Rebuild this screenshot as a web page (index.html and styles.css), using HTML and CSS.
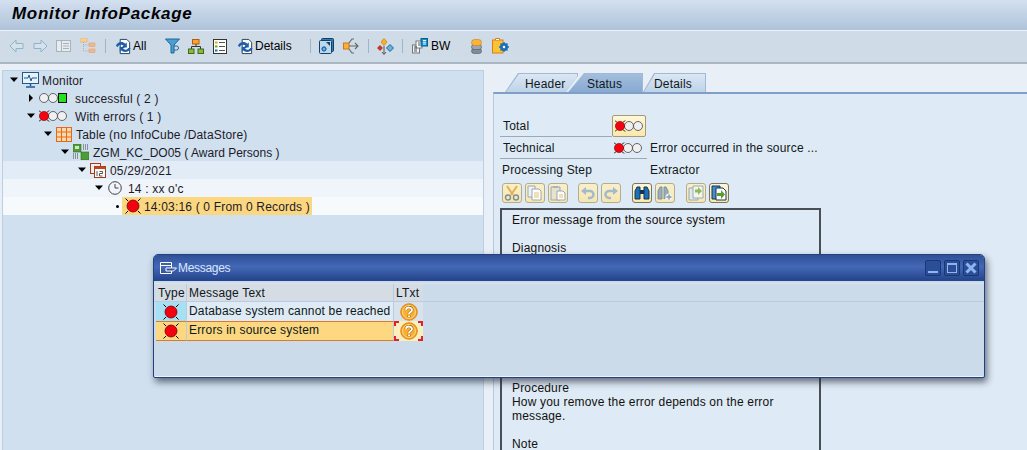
FILE: index.html
```html
<!DOCTYPE html>
<html lang="en">
<head>
  <meta charset="UTF-8">
  <meta name="viewport" content="width=device-width, initial-scale=1.0">
  <title>Monitor InfoPackage</title>
  <link rel="stylesheet" href="styles.css">
</head>
<body>
  <!-- Shared icons -->
  <svg class="defs" width="0" height="0">
    <symbol id="light-red" viewBox="0 0 30 16">
      <path d="M0 2.500l2 2M10 2.500l-2 2M0 13.500l2-2M10 13.500l-2-2" stroke="#000" fill="none"/>
      <circle cx="14" cy="8" r="4.500" fill="#eef0f2" stroke="#444" stroke-width=".8"/>
      <circle cx="23" cy="8" r="4.500" fill="#eef0f2" stroke="#444" stroke-width=".8"/>
      <circle cx="5" cy="8" r="4.600" fill="#f5000f" stroke="#700" stroke-width=".6"/>
    </symbol>
    <symbol id="light-green" viewBox="0 0 30 16">
      <circle cx="5" cy="8" r="4.500" fill="#eef0f2" stroke="#444" stroke-width=".8"/>
      <circle cx="14" cy="8" r="4.500" fill="#eef0f2" stroke="#444" stroke-width=".8"/>
      <rect x="19.500" y="3.500" width="8" height="9" fill="#27e21f" stroke="#111"/>
    </symbol>
    <symbol id="led-red" viewBox="0 0 16 16">
      <path d="M.5.5l2.500 2.500M15.500.5L13 3M.5 15.500L3 13M15.500 15.500L13 13" stroke="#000" fill="none"/>
      <circle cx="8" cy="8" r="6" fill="#f2000f" stroke="#700" stroke-width=".8"/>
    </symbol>
    <symbol id="refresh" viewBox="0 0 18 18">
      <path d="M5.500 1.500h7l3 3v12h-10z" fill="#fff" stroke="#1d3d63"/>
      <path d="M1 8.500C2 4 8 3 11 6l1.500-1.500V10H7l2-2C7 6.500 4 7 3 9.500z" fill="#1f5ea8"/>
      <path d="M16.500 10.500C15.500 15 9 16 6.500 13L5 14.500V9.500h5.500l-2 2c2 1.500 4.500 1 5.500-1z" fill="#1f5ea8"/>
    </symbol>
    <symbol id="help" viewBox="0 0 18 18">
      <circle cx="9" cy="9" r="8.300" fill="#f7a11c" stroke="#d9760c" stroke-width=".8"/>
      <circle cx="9" cy="9" r="6.500" fill="#fbb02f" stroke="#fcd98a"/>
      <path d="M6 6.800C6.300 3.800 12 3.800 12 7 12 9.200 9 9 9 11M9 12.300v2" fill="none" stroke="#a85c0c" stroke-width="3"/>
      <path d="M6 6.800C6.300 3.800 12 3.800 12 7 12 9.200 9 9 9 11M9 12.500v1.600" fill="none" stroke="#fff" stroke-width="1.900"/>
    </symbol>
    <symbol id="gear" viewBox="0 0 10 10">
      <circle cx="5" cy="5" r="3" fill="none" stroke="#1c6fb5" stroke-width="2"/>
      <path d="M5 0v10M0 5h10M1.500 1.500l7 7M8.500 1.500l-7 7" stroke="#1c6fb5" stroke-width="1.300"/>
      <circle cx="5" cy="5" r="1.200" fill="#fff"/>
    </symbol>
  </svg>

  <header class="title-bar">
    <h1>Monitor InfoPackage</h1>
  </header>

  <nav class="toolbar">
    <svg class="tool tool-back" width="15" height="14" viewBox="0 0 15 14"><path d="M7 1L1 7l6 6V9.500h7v-5H7z" fill="#d5e2ec" stroke="#8fb4c9"/></svg>
    <svg class="tool tool-fwd" width="15" height="14" viewBox="0 0 15 14"><path d="M8 1l6 6-6 6V9.500H1v-5h7z" fill="#d5e2ec" stroke="#8fb4c9"/></svg>
    <svg class="tool tool-layout" width="15" height="12" viewBox="0 0 15 12"><rect x=".5" y=".5" width="14" height="11" fill="#e6ebf0" stroke="#a9b2ba"/><path d="M5.500 1v10M7 3.500h6M7 6h6M7 8.500h6" stroke="#a9b2ba"/></svg>
    <svg class="tool tool-tree" width="16" height="16" viewBox="0 0 16 16"><rect x="0" y="0" width="7" height="4" fill="#f6cf9a" stroke="#e5ac74" stroke-width=".6"/><rect x="9" y="5" width="6" height="3.500" fill="#f2b68d" stroke="#e5a070" stroke-width=".6"/><rect x="9" y="11" width="6" height="3.500" fill="#f2b68d" stroke="#e5a070" stroke-width=".6"/><path d="M3.500 4v9H9M3.500 7H9" fill="none" stroke="#a9b2ba" stroke-dasharray="1 1"/></svg>
    <span class="sep"></span>
    <svg class="tool tool-refresh" width="17" height="17"><use href="#refresh"/></svg>
    <span class="tool-label label-all">All</span>
    <svg class="tool tool-filter" width="15" height="16" viewBox="0 0 15 16"><path d="M.5 1h14L9 7v8H6V7z" fill="#4e9fd0" stroke="#17699e"/><path d="M9 8h2.500a2 2 0 0 1 0 4H9" fill="none" stroke="#17699e"/></svg>
    <svg class="tool tool-hier" width="16" height="15" viewBox="0 0 16 15"><rect x="4.500" y=".5" width="6.500" height="4.500" fill="#f9a62a" stroke="#b35a10"/><path d="M8 5v3M3.500 10V7.500h9V10" fill="none" stroke="#333"/><rect x=".5" y="10" width="5.500" height="4.500" fill="#8abb3c" stroke="#3d6b1c"/><rect x="10" y="10" width="5.500" height="4.500" fill="#8abb3c" stroke="#3d6b1c"/></svg>
    <svg class="tool tool-list" width="14" height="15" viewBox="0 0 14 15"><rect x=".5" y=".5" width="13" height="14" fill="#fff" stroke="#333"/><path d="M6 3.500h6M6 7.500h6M6 11.500h6" stroke="#555"/><rect x="2" y="2.500" width="2.500" height="2" fill="#e3a21a"/><rect x="2" y="6.500" width="2.500" height="2" fill="#6fa52e"/><rect x="2" y="10.500" width="2.500" height="2" fill="#1f6fb5"/></svg>
    <svg class="tool tool-refresh2" width="17" height="17"><use href="#refresh"/></svg>
    <span class="tool-label label-details">Details</span>
    <span class="sep sep-a"></span>
    <svg class="tool tool-win" width="15" height="16" viewBox="0 0 15 16"><rect x="2.500" y=".5" width="12" height="13" rx="1" fill="#2c7fb8" stroke="#143e66"/><rect x=".5" y="2.500" width="12" height="13" rx="1" fill="#bcd9ec" stroke="#143e66"/><path d="M7 4h4v4z" fill="#143e66"/><use href="#gear" x="2" y="8" width="6" height="6"/></svg>
    <svg class="tool tool-out" width="16" height="16" viewBox="0 0 16 16"><rect x=".5" y="5" width="5.500" height="6" fill="#f8b233" stroke="#d2741a"/><path d="M6 8h9M12 5l3 3-3 3M6 5l3-4h2M6 11l3 4h2" fill="none" stroke="#666" stroke-width="1.100"/></svg>
    <span class="sep sep-b"></span>
    <svg class="tool tool-diamonds" width="17" height="17" viewBox="0 0 17 17"><path d="M7 .5l3 3.500-3 3.500L4 4z" fill="#f5b120" stroke="#c77e12" stroke-width=".7"/><path d="M3 7l3 3-3 3-3-3z" fill="#c23a2a"/><path d="M13 6.500l3.500 3.500-3.500 3.500L9.500 10z" fill="#6bb1d8" stroke="#1f6797"/><path d="M7 8v8M5 14l2 2.500L9 14" fill="none" stroke="#555"/></svg>
    <span class="sep sep-c"></span>
    <svg class="tool tool-boxes" width="16" height="16" viewBox="0 0 16 16"><rect x="0.500" y="7" width="7" height="8" fill="#eef2f5" stroke="#777"/><rect x="4" y="3" width="6" height="7" fill="#fff" stroke="#777"/><rect x="9" y=".5" width="6.500" height="7.500" fill="#0f8fd0" stroke="#0b5c8e"/><path d="M11 2.500h3M11 4.200h3M11 6h3" stroke="#fff"/><path d="M2 9h3M2 11h3M2 13h3M6 5h2M6 7h2" stroke="#555"/></svg>
    <span class="tool-label label-bw">BW</span>
    <svg class="tool tool-db" width="11" height="15" viewBox="0 0 11 15"><rect x=".5" y="9.500" width="10" height="5" rx="2.500" fill="#7f8d99" stroke="#4e5a64" stroke-width=".6"/><rect x=".5" y="5.500" width="10" height="5" rx="2.500" fill="#9aa7b2" stroke="#4e5a64" stroke-width=".6"/><rect x=".5" y=".5" width="10" height="6" rx="3" fill="#f9b43a" stroke="#d17a16" stroke-width=".6"/></svg>
    <svg class="tool tool-clip" width="17" height="16" viewBox="0 0 17 16"><rect x=".5" y="2" width="10.500" height="13" fill="#fbc437" stroke="#e07b1c"/><path d="M3.500 2V.5h4V2" fill="#fff" stroke="#e07b1c"/><use href="#gear" x="7" y="4" width="10" height="10"/></svg>
  </nav>

  <main class="workarea">
    <section class="tree-panel">
      <div class="tree-row level-0">
        <span class="caret open"></span>
        <svg class="node-icon" width="17" height="16" viewBox="0 0 17 16"><rect x=".5" y=".5" width="16" height="11" fill="#e8f2fa" stroke="#1f5a96"/><path d="M2 6h4l1-3 2 6 1-3h5" fill="none" stroke="#1f5a96"/><path d="M8.500 12v2M4 15h9" stroke="#1f5a96" stroke-width="1.500"/></svg>
        <span class="node-text">Monitor</span>
      </div>
      <div class="tree-row level-1">
        <span class="caret closed"></span>
        <svg class="node-icon light" width="30" height="16"><use href="#light-green"/></svg>
        <span class="node-text">successful ( 2 )</span>
      </div>
      <div class="tree-row level-1">
        <span class="caret open"></span>
        <svg class="node-icon light" width="30" height="16"><use href="#light-red"/></svg>
        <span class="node-text">With errors ( 1 )</span>
      </div>
      <div class="tree-row level-2">
        <span class="caret open"></span>
        <svg class="node-icon" width="16" height="15" viewBox="0 0 16 15"><rect x=".5" y=".5" width="15" height="14" fill="#fcd9a8" stroke="#e4691c"/><path d="M.5 5h15M.5 10h15M5.500 .5v14M10.500 .5v14" stroke="#e4691c"/></svg>
        <span class="node-text">Table (no InfoCube /DataStore)</span>
      </div>
      <div class="tree-row level-3">
        <span class="caret open"></span>
        <svg class="node-icon" width="16" height="16" viewBox="0 0 16 16"><rect x="0" y="0" width="8" height="8" fill="#4f9c3a" stroke="#2f6d20" stroke-width=".6"/><rect x="8" y="8" width="8" height="8" fill="#4f9c3a" stroke="#2f6d20" stroke-width=".6"/><path d="M2 2h4v3H2z" fill="#cfe8c0"/><path d="M10 1h5M10 3h5M10 5h5M0 10h6M0 12h6M0 14h6" stroke="#444" stroke-dasharray="1 1"/></svg>
        <span class="node-text caps">ZGM_KC_DO05 ( Award Persons )</span>
      </div>
      <div class="tree-row level-4 row-tint1">
        <span class="caret open"></span>
        <svg class="node-icon" width="16" height="15" viewBox="0 0 16 15"><rect x=".5" y=".5" width="10" height="10" fill="#eee" stroke="#a63a1c"/><rect x="4.500" y="3.500" width="11" height="11" fill="#fff" stroke="#a63a1c"/><rect x="4.500" y="3.500" width="11" height="2.500" fill="#c4441e"/><path d="M7 8v5M9.500 8.500h3v2h-3v2.500h3" fill="none" stroke="#444" stroke-width=".9"/></svg>
        <span class="node-text">05/29/2021</span>
      </div>
      <div class="tree-row level-5 row-tint2">
        <span class="caret open"></span>
        <svg class="node-icon clock" width="14" height="14" viewBox="0 0 14 14"><circle cx="7" cy="7" r="6.300" fill="none" stroke="#444"/><path d="M7 3v4h3.500" fill="none" stroke="#444"/></svg>
        <span class="node-text">14 : xx o'c</span>
      </div>
      <div class="tree-row level-6 row-tint3">
        <span class="bullet"></span>
        <span class="node-selected">
          <svg class="led" width="16" height="16"><use href="#led-red"/></svg>
          <span class="node-text">14:03:16 ( 0 From 0 Records )</span>
        </span>
      </div>
    </section>

    <section class="detail-panel">
      <div class="tabs">
        <div class="tab tab-header"><span>Header</span></div>
        <div class="tab tab-status"><span>Status</span></div>
        <div class="tab tab-details"><span>Details</span></div>
      </div>
      <div class="tab-body">
        <div class="status-row row-total">
          <span class="status-label underlined">Total</span>
          <button class="light-button"><svg width="30" height="16"><use href="#light-red"/></svg></button>
        </div>
        <div class="status-row row-tech">
          <span class="status-label underlined wide">Technical</span>
          <svg class="tech-light" width="30" height="16"><use href="#light-red"/></svg>
          <span class="status-value">Error occurred in the source ...</span>
        </div>
        <div class="status-row row-step">
          <span class="status-label step">Processing Step</span>
          <span class="status-value">Extractor</span>
        </div>
        <div class="edit-tools">
          <span class="edit-btn off"><svg width="16" height="16" viewBox="0 0 16 16"><path d="M3 1l6 9M13 1L7 10" stroke="#e6b04a" stroke-width="2"/><circle cx="4" cy="12.500" r="2.500" fill="none" stroke="#7f8f96" stroke-width="1.400"/><circle cx="12" cy="12.500" r="2.500" fill="none" stroke="#7f8f96" stroke-width="1.400"/></svg></span>
          <span class="edit-btn off"><svg width="16" height="16" viewBox="0 0 16 16"><path d="M1 1h7v11H1z" fill="#eef2f2" stroke="#9aa8b0"/><path d="M5 4h7l2 2v9H5z" fill="#fff" stroke="#9aa8b0"/><path d="M7 8h5M7 10h5M7 12h5" stroke="#e2c26a"/></svg></span>
          <span class="edit-btn off"><svg width="16" height="16" viewBox="0 0 16 16"><path d="M1 2h9v13H1z" fill="#e6e2cf" stroke="#9aa8b0"/><path d="M3 1h5v2H3z" fill="#a8b4ba"/><path d="M7 6h6l2 2v7H7z" fill="#fff" stroke="#9aa8b0"/><path d="M9 10h4M9 12h4" stroke="#e2c26a"/></svg></span>
          <span class="edit-btn off gap-a"><svg width="16" height="16" viewBox="0 0 16 16"><path d="M5 6h5a3.500 3.500 0 0 1 0 7H8" fill="none" stroke="#a3bbc8" stroke-width="2.500"/><path d="M6 2v8L1 6z" fill="#a3bbc8"/></svg></span>
          <span class="edit-btn off"><svg width="16" height="16" viewBox="0 0 16 16"><path d="M11 6H6a3.500 3.500 0 0 0 0 7h2" fill="none" stroke="#a3bbc8" stroke-width="2.500"/><path d="M10 2v8l5-4z" fill="#a3bbc8"/></svg></span>
          <span class="edit-btn gap"><svg width="16" height="16" viewBox="0 0 16 16"><path d="M1 14V6l2-4h3v12zM15 14V6l-2-4h-3v12z" fill="#1f6fb5" stroke="#12345a"/><path d="M6 5h4v4H6z" fill="#12345a"/></svg></span>
          <span class="edit-btn off"><svg width="16" height="16" viewBox="0 0 16 16"><path d="M1 14V6l2-4h2v12zM11 10V6L9 2H7v12z" fill="#97aeba" stroke="#7f94a0"/><circle cx="12" cy="12" r="3.500" fill="#eef2f2"/><path d="M12 9.500v5M9.500 12h5" stroke="#8a9aa6" stroke-width="1.400"/></svg></span>
          <span class="edit-btn off gap"><svg width="16" height="16" viewBox="0 0 16 16"><path d="M1 3h9v12H1z" fill="#dfe9e6" stroke="#9aa8b0"/><path d="M5 1h10v12H5z" fill="#f4f6ee" stroke="#9aa8b0"/><path d="M7 4.500h3V2l4 4-4 4V7.500H7z" fill="#8dbb5c"/></svg></span>
          <span class="edit-btn"><svg width="16" height="16" viewBox="0 0 16 16"><path d="M1 1h8v13H1z" fill="#4a8cc4" stroke="#12345a"/><path d="M5 3h7l3 3v9H5z" fill="#fff" stroke="#12345a"/><path d="M6 8h4V5l4 4.500L10 14v-3H6z" fill="#5d9b2d"/></svg></span>
        </div>
        <div class="long-text">
          <p>Error message from the source system</p>
          <p class="next-para">Diagnosis</p>
          <div class="text-gap"></div>
          <p>Procedure</p>
          <p>How you remove the error depends on the error<br>message.</p>
          <p class="next-para">Note</p>
        </div>
      </div>
    </section>
  </main>

  <!-- Dialog floats over the work area -->
  <div class="dialog">
    <div class="dialog-title">
      <svg class="dialog-icon" width="17" height="12" viewBox="0 0 17 12"><path d="M.5.500h11v11H.5zM.5 3.500h11" fill="none" stroke="#fff"/><path d="M6 6h10.500L13.500 9H6z" fill="#2f5098" stroke="#fff"/></svg>
      <span class="dialog-name">Messages</span>
      <div class="window-buttons">
        <span class="win-btn"><i class="btn-min"></i></span>
        <span class="win-btn"><i class="btn-max"></i></span>
        <span class="win-btn"><svg width="12" height="12" viewBox="0 0 12 12"><path d="M1.500 1.500l9 9M10.500 1.500l-9 9" stroke="#8fb4f2" stroke-width="3"/></svg></span>
      </div>
    </div>
    <div class="msg-table">
      <div class="msg-row msg-head">
        <span class="col-type">Type</span>
        <span class="col-text">Message Text</span>
        <span class="col-ltxt">LTxt</span>
      </div>
      <div class="msg-row msg-first">
        <span class="col-type"><svg width="16" height="16"><use href="#led-red"/></svg></span>
        <span class="col-text">Database system cannot be reached</span>
        <span class="col-ltxt"><svg width="18" height="18"><use href="#help"/></svg></span>
      </div>
      <div class="msg-row msg-selected">
        <span class="col-type"><svg width="16" height="16"><use href="#led-red"/></svg></span>
        <span class="col-text">Errors in source system</span>
        <span class="col-ltxt"><svg width="18" height="18"><use href="#help"/></svg></span>
      </div>
    </div>
  </div>
</body>
</html>
```

FILE: styles.css
```css
/* Reset & Fonts */
* {
  margin: 0;
  padding: 0;
  box-sizing: border-box;
}

html, body {
  height: 450px;
  overflow: hidden;
}

body {
  font-family: 'Liberation Sans', Arial, sans-serif;
  font-size: 12px;
  letter-spacing: 0.18px;
  color: #101820;
  background-color: #e8eff7;
}

.defs {
  position: absolute;
}

/* Title */
.title-bar {
  height: 31px;
  padding: 4px 0 0 12px;
  background: linear-gradient(#d3e0ef, #aec3da);
  border-bottom: 1px solid #eef3f8;
}

.title-bar h1 {
  font-size: 17px;
  font-style: italic;
  font-weight: bold;
  letter-spacing: 0.7px;
  line-height: 20px;
  color: #000;
}

/* Toolbar */
.toolbar {
  display: flex;
  align-items: center;
  height: 33px;
  padding: 0 0 1px 9px;
  background-color: #cfdce8;
  border-bottom: 2px solid #a9b7c4;
}

.tool {
  flex: none;
}

.tool-fwd { margin-left: 9px; }
.tool-layout { margin-left: 8px; }
.tool-tree { margin-left: 9px; }
.tool-refresh { margin-left: 9px; }
.tool-filter { margin-left: 18px; }
.tool-hier { margin-left: 8px; }
.tool-list { margin-left: 9px; }
.tool-refresh2 { margin-left: 10px; }
.tool-win { margin-left: 8px; }
.tool-out { margin-left: 9px; }
.tool-diamonds { margin-left: 8px; }
.tool-boxes { margin-left: 9px; }
.tool-db { margin-left: 22px; }
.tool-clip { margin-left: 10px; }

.tool-label {
  flex: none;
  margin-left: 1px;
  letter-spacing: 0;
  color: #000;
}

.label-all { width: 14px; }
.label-details { width: 36px; }

.label-bw {
  width: 18px;
  margin-left: 3px;
}

.sep {
  width: 1px;
  height: 14px;
  margin-left: 9px;
  background-color: #9db5cb;
}

.sep-a { margin-left: 19px; }
.sep-b { margin-left: 9px; }
.sep-c { margin-left: 8px; }

/* Work area */
.workarea {
  display: flex;
  height: 386px;
  padding-top: 6px;
}

.tree-panel {
  flex: none;
  width: 482px;
  margin-left: 2px;
  background-color: #d0e0ef;
  border: 1px solid #bccfe2;
  border-bottom: none;
}

.tree-row {
  display: flex;
  align-items: center;
  height: 18px;
  color: #1d1a2a;
}

.level-0 { padding-left: 6px; }
.level-1 { padding-left: 23px; }
.level-2 { padding-left: 40px; }
.level-3 { padding-left: 57px; }
.level-4 { padding-left: 74px; }
.level-5 { padding-left: 91px; }
.level-6 { padding-left: 108px; }

.row-tint1 { background-color: #e2ecf6; }
.row-tint2 { background-color: #eff5fb; }
.row-tint3 { background-color: #f7fafd; }

.caret {
  flex: none;
  width: 10px;
  height: 10px;
  margin-right: 3px;
  background-color: #000;
}

.caret.open {
  clip-path: polygon(10% 25%, 90% 25%, 50% 70%);
}

.caret.closed {
  clip-path: polygon(30% 10%, 70% 50%, 30% 90%);
}

.bullet {
  flex: none;
  width: 3px;
  height: 3px;
  margin: 0 3px 0 5px;
  border-radius: 50%;
  background-color: #000;
}

.node-icon {
  flex: none;
  margin-right: 4px;
}

.node-icon.light {
  margin-right: 6px;
}

.node-icon.clock {
  margin: 0 6px 0 1px;
}

.node-text {
  margin-top: 2px;
}

.caps {
  letter-spacing: 0;
}

.level-0 .node-icon {
  margin-right: 3px;
}

.node-selected {
  display: flex;
  align-items: center;
  height: 18px;
  padding: 0 2px 0 3px;
  background-color: #fdd77f;
}

.led {
  flex: none;
  margin-right: 3px;
}

/* Detail panel */
.detail-panel {
  flex: 1;
  margin-left: 9px;
  min-width: 0;
}

.tabs {
  display: flex;
  height: 22px;
  padding: 3px 0 0 12px;
}

.tab {
  position: relative;
  height: 19px;
  background-color: #9fb9d6;
}

.tab::before {
  content: "";
  position: absolute;
  inset: 1px 1px 0 1px;
  background: linear-gradient(#dbe7f3, #bed3e9);
  clip-path: inherit;
}

.tab span {
  position: relative;
  display: block;
  line-height: 23px;
}

.tab-header {
  width: 73px;
  clip-path: polygon(0 100%, 13px 0, 100% 0, 100% 3px, 61px 100%);
  padding-left: 20px;
}

.tab-status {
  width: 75px;
  margin-left: -10px;
  clip-path: polygon(0 100%, 16px 0, 100% 0, 100% 100%);
  padding-left: 19px;
}

.tab-status::before {
  background: linear-gradient(#a3bedd, #88a9d1);
}

.tab-details {
  width: 63px;
  clip-path: polygon(0 100%, 11px 0, 100% 0, 100% 100%);
  padding-left: 11px;
}

.tab-body {
  height: 358px;
  padding: 0 0 0 6px;
  background-color: #deeaf5;
  border-top: 2px solid #7f9fc5;
  border-left: 1px solid #b5cadf;
  overflow: hidden;
}

.status-row {
  display: flex;
  align-items: center;
  height: 22px;
}

.row-total {
  margin-top: 21px;
}

.status-label {
  display: block;
  padding-left: 3px;
}

.underlined {
  align-self: flex-start;
  width: 112px;
  height: 21px;
  margin-top: 1px;
  line-height: 20px;
  border-bottom: 1px solid #9daab6;
}

.underlined.wide {
  width: 147px;
  margin-right: -147px;
}

.light-button {
  display: flex;
  align-items: center;
  justify-content: center;
  width: 34px;
  height: 22px;
  padding-left: 2px;
  background: linear-gradient(#fff7d9, #fbe8ab);
  border: 1px solid #a59a78;
  border-radius: 2px;
}

.tech-light {
  flex: none;
  margin-left: 114px;
  margin-right: 6px;
}

.row-tech .status-value {
  white-space: nowrap;
}

.status-label.step {
  width: 150px;
  padding-left: 2px;
}

.edit-tools {
  display: flex;
  gap: 3px;
  margin-top: 2px;
  padding-left: 2px;
}

.edit-btn {
  display: flex;
  align-items: center;
  justify-content: center;
  width: 20px;
  height: 20px;
  background: linear-gradient(#fff7d9, #fbe8ab);
  border: 1px solid #7b7460;
  border-radius: 3px;
}

.edit-btn.off {
  border-color: #b3ad8e;
  background: linear-gradient(#f8f0cc, #f6e6b4);
}

.edit-btn.gap {
  margin-left: 8px;
}

.edit-btn.gap-a {
  margin-left: 7px;
}

.long-text {
  width: 321px;
  height: 300px;
  margin-top: 5px;
  padding: 3px 10px 0;
  border: 2px solid #4a4f55;
  border-bottom: none;
  line-height: 14px;
  color: #111;
}

.next-para {
  margin-top: 14px;
}

.text-gap {
  height: 126px;
}

/* Dialog */
.dialog {
  position: absolute;
  top: 254px;
  left: 153px;
  width: 832px;
  height: 124px;
  background-color: #cbdbea;
  border: 1px solid #23407f;
  border-radius: 5px 5px 2px 2px;
  box-shadow: 2px 4px 7px rgba(30, 40, 60, 0.65), inset 0 -1px 0 #eef3f8;
}

.dialog-title {
  display: flex;
  align-items: center;
  height: 26px;
  padding: 0 5px 0 6px;
  background: linear-gradient(#2f5098, #4468b6 45%, #23438a);
  border-radius: 4px 4px 0 0;
  color: #d8e6fb;
}

.dialog-icon {
  flex: none;
  margin-right: 1px;
}

.dialog-name {
  flex: 1;
  letter-spacing: -0.3px;
}

.window-buttons {
  display: flex;
  gap: 3px;
}

.win-btn {
  display: flex;
  align-items: center;
  justify-content: center;
  width: 16px;
  height: 16px;
  background-color: #2a4f96;
  border: 1px solid #1b3670;
  border-radius: 2px;
}

.btn-min {
  display: block;
  width: 10px;
  height: 2px;
  margin-top: 8px;
  background-color: #8fb4f2;
}

.btn-max {
  display: block;
  width: 10px;
  height: 10px;
  border: 1px solid #8fb4f2;
  border-top-width: 2px;
}

.msg-table {
  padding: 3px 0 0 2px;
}

.msg-row {
  display: flex;
  height: 19px;
}

.msg-row span {
  display: flex;
  align-items: center;
  flex: none;
  white-space: nowrap;
}

.col-type {
  width: 31px;
  padding-left: 2px;
  border-right: 1px solid #b9cbdc;
}

.col-text {
  width: 207px;
  padding-left: 2px;
  border-right: 1px solid #b9cbdc;
}

.col-ltxt {
  width: 29px;
  padding-left: 2px;
}

.msg-head {
  height: 18px;
  margin-left: -2px;
  padding-left: 2px;
  box-shadow: 0 -1px 0 #d8e3ee;
  border-bottom: 1px solid #b9cbdc;
}

.msg-head span {
  background-color: #d6dce4;
}

.msg-first .col-type {
  justify-content: center;
  padding: 0;
  background-color: #a5e0f4;
}

.msg-first .col-text {
  padding-bottom: 2px;
  background-color: #deeaf6;
}

.msg-first .col-ltxt {
  justify-content: center;
  padding: 0;
  background-color: #d8e2ec;
}

.msg-selected {
  height: 20px;
}

.msg-selected .col-type,
.msg-selected .col-text {
  background-color: #fdd880;
  border-top: 1px solid #d97b2c;
  border-bottom: 1px solid #d97b2c;
}

.msg-selected .col-text {
  padding-bottom: 2px;
}

.msg-selected .col-type {
  justify-content: center;
  padding: 0;
}

/* Red corner marks of the focused cell */
.msg-selected .col-ltxt {
  justify-content: center;
  padding: 0;
  background-color: #fdeebd;
  background-image:
    linear-gradient(#e0202a, #e0202a), linear-gradient(#e0202a, #e0202a),
    linear-gradient(#e0202a, #e0202a), linear-gradient(#e0202a, #e0202a),
    linear-gradient(#e0202a, #e0202a), linear-gradient(#e0202a, #e0202a),
    linear-gradient(#e0202a, #e0202a), linear-gradient(#e0202a, #e0202a);
  background-size: 5px 2px, 2px 5px, 5px 2px, 2px 5px, 5px 2px, 2px 5px, 5px 2px, 2px 5px;
  background-position: left top, left top, right top, right top, left bottom, left bottom, right bottom, right bottom;
  background-repeat: no-repeat;
}
```
